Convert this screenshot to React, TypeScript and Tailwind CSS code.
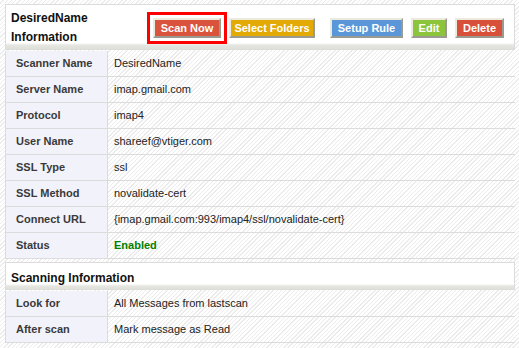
import React from 'react';

const rows: [string, React.ReactNode][] = [
  ['Scanner Name', 'DesiredName'],
  ['Server Name', 'imap.gmail.com'],
  ['Protocol', 'imap4'],
  ['User Name', 'shareef@vtiger.com'],
  ['SSL Type', 'ssl'],
  ['SSL Method', 'novalidate-cert'],
  ['Connect URL', '{imap.gmail.com:993/imap4/ssl/novalidate-cert}'],
  ['Status', <span className="font-bold text-[#008000]">Enabled</span>],
];

const scanRows: [string, string][] = [
  ['Look for', 'All Messages from lastscan'],
  ['After scan', 'Mark message as Read'],
];

const Row = ({ label, value }: { label: string; value: React.ReactNode }) => (
  <div className="flex h-[26px] border-b border-[#dcdcdc]">
    <div className="w-[102px] shrink-0 bg-[#f2f2fb] border-r border-[#dcdcdc] pl-[10px] flex items-center font-bold text-[#3a3a3a]">
      {label}
    </div>
    <div className="flex-1 pl-[6px] flex items-center text-[#222]">{value}</div>
  </div>
);

const Btn = ({ label, color, w }: { label: string; color: string; w: string }) => (
  <button
    className={`h-[20px] shrink-0 whitespace-nowrap text-white font-bold text-[11px] leading-none border-2 border-t-[#ece9df] border-l-[#ece9df] border-r-[#9a9a90] border-b-[#9a9a90] ${w} ${color}`}
  >
    {label}
  </button>
);

export default function App() {
  return (
    <div className="w-[519px] h-[348px] overflow-hidden bg-[repeating-linear-gradient(135deg,#ffffff_0px,#ffffff_2px,#ececec_2px,#ececec_3px)] pt-[4px] pl-[5px] pr-[4px] font-['Liberation_Sans',Arial,sans-serif] text-[11px]">
      {/* header */}
      <div className="h-[46px] border border-[#dcdcdc] bg-[linear-gradient(to_bottom,#ffffff_0px,#ffffff_38px,#e6e6e2_40px,#dcdcd6_46px)] flex items-start">
        <div className="w-[142px] shrink-0 pl-[5px] pt-[4px] font-bold text-[12px] leading-[19px] text-[#111]">
          DesiredName
          <br />
          Information
        </div>
        <div className="flex items-center pt-[7px]">
          <div className="border-[3px] border-[#ff0000] p-[3px] -ml-[1px]">
            <Btn label="Scan Now" color="bg-[#d9533d]" w="w-[68px]" />
          </div>
          <div className="flex gap-[8px] ml-[2px]">
            <Btn label="Select Folders" color="bg-[#e3a905]" w="w-[86px]" />
            <div className="ml-[7px]">
              <Btn label="Setup Rule" color="bg-[#5b97d8]" w="w-[73px]" />
            </div>
            <Btn label="Edit" color="bg-[#8cc43c]" w="w-[36px]" />
            <Btn label="Delete" color="bg-[#d9503a]" w="w-[49px]" />
          </div>
        </div>
      </div>

      <div className="mt-[1px] border-l border-[#dcdcdc]">
        {rows.map(([l, v]) => (
          <Row key={l} label={l} value={v} />
        ))}
      </div>

      <div className="mt-[3px] h-[28px] border border-[#dcdcdc] bg-[linear-gradient(to_bottom,#ffffff_0px,#ffffff_21px,#e6e6e2_23px,#dcdcd6_28px)] pl-[5px] pt-[6px] font-bold text-[12px] text-[#111]">
        Scanning Information
      </div>

      <div className="mt-[1px] border-l border-[#dcdcdc]">
        {scanRows.map(([l, v]) => (
          <Row key={l} label={l} value={v} />
        ))}
      </div>
    </div>
  );
}
